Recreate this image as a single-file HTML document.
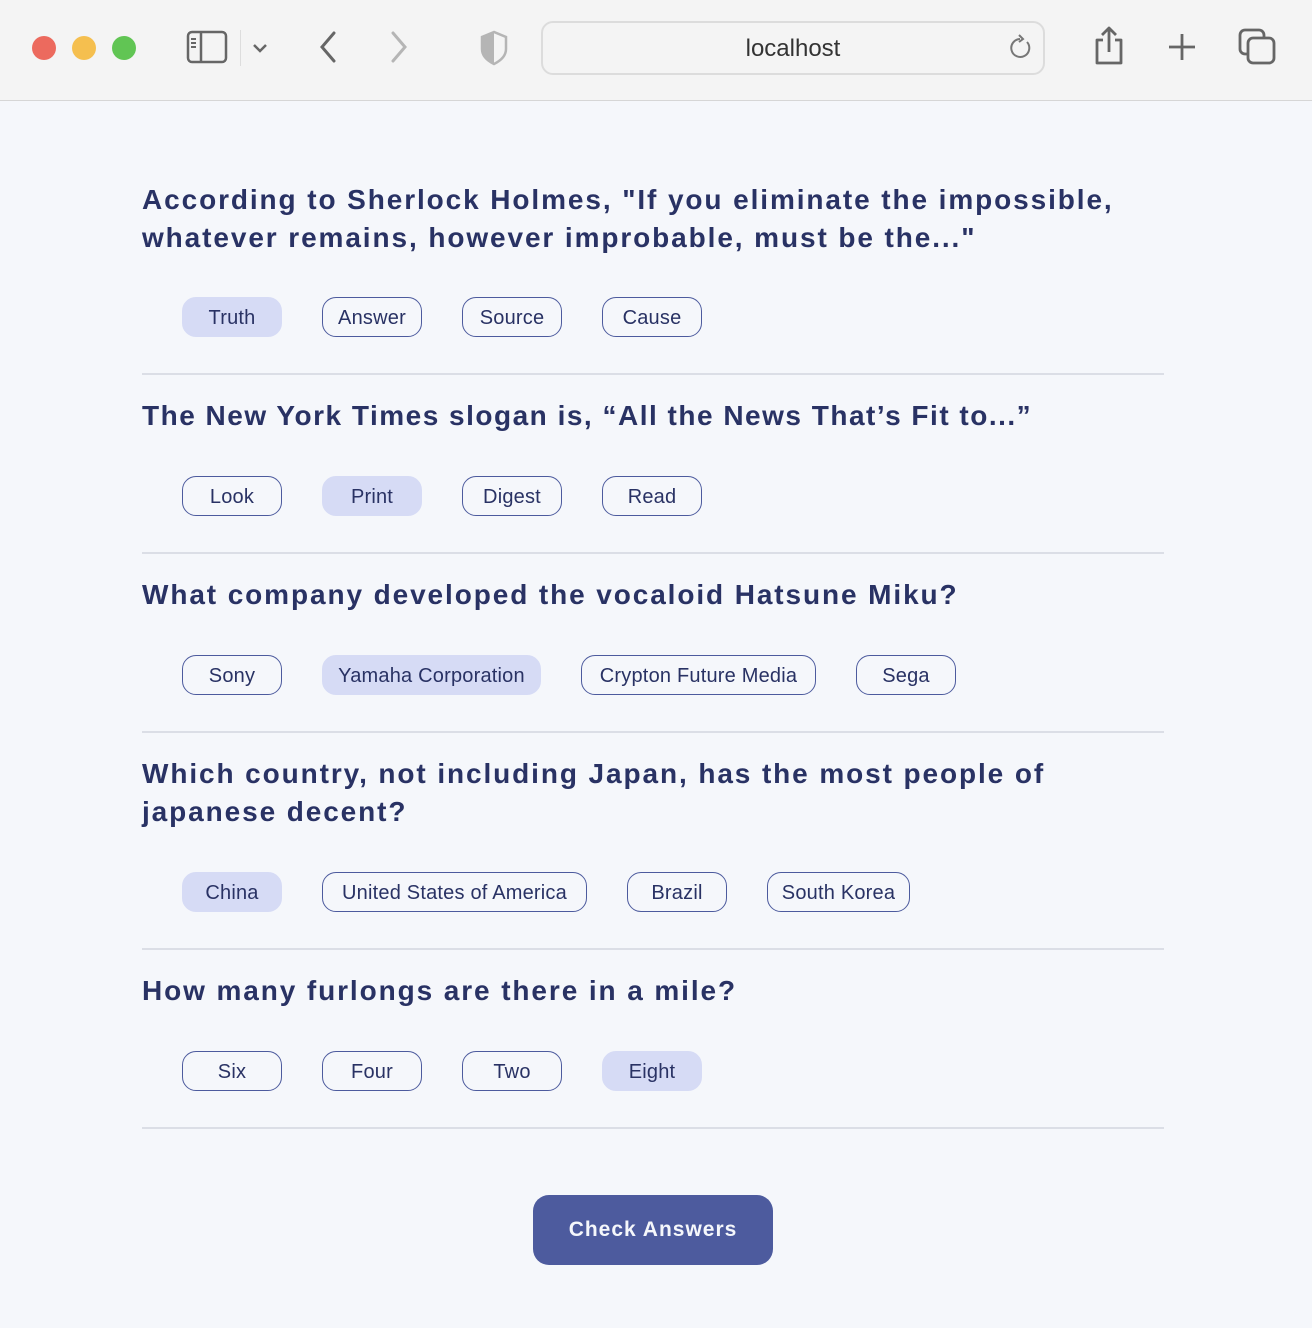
<!DOCTYPE html>
<html><head><meta charset="utf-8"><style>
*{margin:0;padding:0;box-sizing:border-box}
body{width:1312px;height:1328px;background:#f5f7fb;font-family:"Liberation Sans",sans-serif;position:relative;overflow:hidden;color:#293264}
.bar{position:absolute;left:0;top:0;width:1312px;height:101px;background:#f4f4f4;border-bottom:1px solid #d6d6d6}
.dot{position:absolute;top:36px;width:24px;height:24px;border-radius:50%}
.url{position:absolute;left:541px;top:21px;width:504px;height:54px;border:2px solid #dcdcdc;border-radius:12px;background:#f4f4f4;text-align:center;line-height:52px;font-size:24px;color:#333}
h2{position:absolute;left:142px;font-size:28px;font-weight:bold;line-height:38px;letter-spacing:1.9px;white-space:nowrap;color:#293264}
.opt{position:absolute;height:40px;border:1px solid #4d5b9e;border-radius:14px;font-size:20px;line-height:40px;text-align:center;color:#293264;white-space:nowrap;letter-spacing:0.2px}
.sel{background:#d6dbf5;border-color:#d6dbf5}
.hr{position:absolute;left:142px;width:1022px;height:2px;background:#dbdee6}
.btn{position:absolute;left:533px;top:1195px;width:240px;height:70px;background:#4d5b9e;border-radius:16px;color:#f5f7fb;font-weight:bold;font-size:21px;text-align:center;line-height:70px;letter-spacing:1px}
svg{position:absolute}
</style></head><body>
<div class="bar">
<div class="dot" style="left:32px;background:#ec6a5e"></div>
<div class="dot" style="left:72px;background:#f5bf4f"></div>
<div class="dot" style="left:112px;background:#61c554"></div>
<svg style="left:186px;top:30px" width="42" height="34" viewBox="0 0 42 34"><rect x="2" y="2" width="38" height="30" rx="4" fill="none" stroke="#666" stroke-width="2.5"/><line x1="15" y1="2" x2="15" y2="32" stroke="#666" stroke-width="2.5"/><path d="M5 9h5M5 13h5M5 17h5" stroke="#666" stroke-width="2"/></svg>
<div style="position:absolute;left:240px;top:30px;width:1px;height:36px;background:#ddd"></div>
<svg style="left:250px;top:40px" width="20" height="16"><path d="M4 5l6 6 6-6" fill="none" stroke="#666" stroke-width="2.5"/></svg>
<svg style="left:314px;top:30px" width="28" height="34"><path d="M20 3L8 17l12 14" fill="none" stroke="#666" stroke-width="3" stroke-linecap="round"/></svg>
<svg style="left:385px;top:30px" width="28" height="34"><path d="M8 3l12 14L8 31" fill="none" stroke="#b5b5b5" stroke-width="3" stroke-linecap="round"/></svg>
<svg style="left:478px;top:30px" width="32" height="36"><path d="M16 2L4 7v12c0 7 6 12 12 15 6-3 12-8 12-15V7z" fill="none" stroke="#b5b5b5" stroke-width="2.5"/><path d="M16 2L4 7v12c0 7 6 12 12 15z" fill="#b5b5b5"/></svg>
<div class="url">localhost</div>
<svg style="left:1008px;top:33px" width="26" height="28"><path d="M19 9a9 9 0 1 1-7-3" fill="none" stroke="#777" stroke-width="2"/><path d="M11 2l4 4-4 3" fill="none" stroke="#777" stroke-width="2"/></svg>
<svg style="left:1092px;top:25px" width="34" height="42"><path d="M11 15H5v23h24V15h-6M17 27V3M10 10l7-7 7 7" fill="none" stroke="#666" stroke-width="2.8" stroke-linejoin="round"/></svg>
<svg style="left:1166px;top:31px" width="32" height="32"><path d="M16 3v26M3 16h26" stroke="#666" stroke-width="2.8"/></svg>
<svg style="left:1238px;top:28px" width="40" height="38"><rect x="2" y="2" width="24" height="24" rx="5" fill="none" stroke="#666" stroke-width="2.8"/><rect x="10" y="10" width="26" height="25" rx="5" fill="#f4f4f4" stroke="#666" stroke-width="2.8"/></svg>
</div>

<h2 style="top:181px">According to Sherlock Holmes, "If you eliminate the impossible,<br>whatever remains, however improbable, must be the..."</h2>
<div class="opt sel" style="left:182px;top:297px;width:100px">Truth</div>
<div class="opt" style="left:322px;top:297px;width:100px">Answer</div>
<div class="opt" style="left:462px;top:297px;width:100px">Source</div>
<div class="opt" style="left:602px;top:297px;width:100px">Cause</div>
<div class="hr" style="top:373px"></div>

<h2 style="top:397px;letter-spacing:1.5px">The New York Times slogan is, “All the News That’s Fit to...”</h2>
<div class="opt" style="left:182px;top:476px;width:100px">Look</div>
<div class="opt sel" style="left:322px;top:476px;width:100px">Print</div>
<div class="opt" style="left:462px;top:476px;width:100px">Digest</div>
<div class="opt" style="left:602px;top:476px;width:100px">Read</div>
<div class="hr" style="top:552px"></div>

<h2 style="top:576px">What company developed the vocaloid Hatsune Miku?</h2>
<div class="opt" style="left:182px;top:655px;width:100px">Sony</div>
<div class="opt sel" style="left:322px;top:655px;width:219px">Yamaha Corporation</div>
<div class="opt" style="left:581px;top:655px;width:235px">Crypton Future Media</div>
<div class="opt" style="left:856px;top:655px;width:100px">Sega</div>
<div class="hr" style="top:731px"></div>

<h2 style="top:755px">Which country, not including Japan, has the most people of<br>japanese decent?</h2>
<div class="opt sel" style="left:182px;top:872px;width:100px">China</div>
<div class="opt" style="left:322px;top:872px;width:265px">United States of America</div>
<div class="opt" style="left:627px;top:872px;width:100px">Brazil</div>
<div class="opt" style="left:767px;top:872px;width:143px">South Korea</div>
<div class="hr" style="top:948px"></div>

<h2 style="top:972px">How many furlongs are there in a mile?</h2>
<div class="opt" style="left:182px;top:1051px;width:100px">Six</div>
<div class="opt" style="left:322px;top:1051px;width:100px">Four</div>
<div class="opt" style="left:462px;top:1051px;width:100px">Two</div>
<div class="opt sel" style="left:602px;top:1051px;width:100px">Eight</div>
<div class="hr" style="top:1127px"></div>

<div class="btn">Check Answers</div>
</body></html>
